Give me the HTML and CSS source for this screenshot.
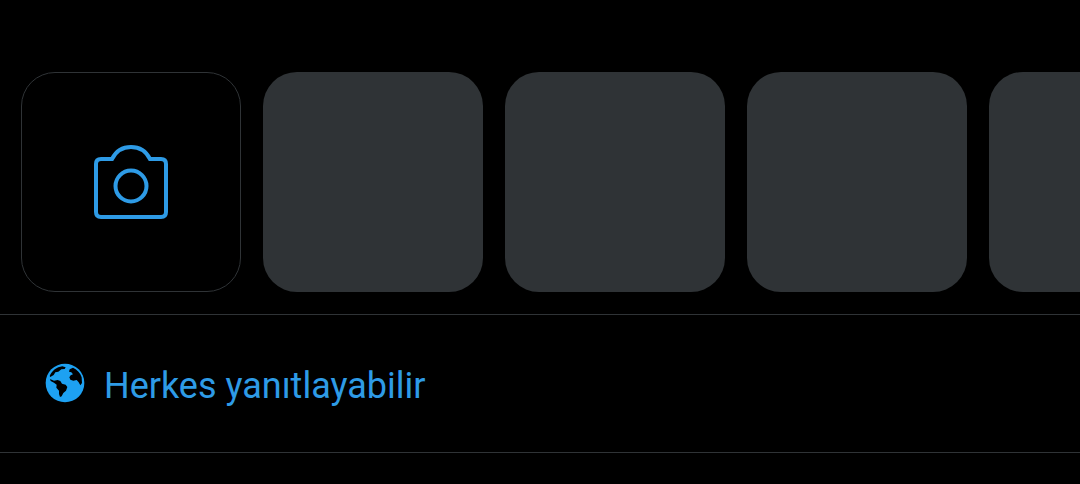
FILE: index.html
```html
<!DOCTYPE html>
<html lang="tr">
<head>
    <meta charset="utf-8">
    <meta name="viewport" content="width=device-width, initial-scale=1">
    <title>Tweet</title>
    <link rel="stylesheet" href="styles.css">
</head>
<body>
    <div class="media-strip">
        <button type="button" class="tile camera" aria-label="Kamera">
            <svg class="camera-icon" viewBox="0 0 100 100" aria-hidden="true">
                <path d="M20 27H31C35 19 42 15 50 15S65 19 69 27H80Q85 27 85 32V80Q85 85 80 85H20Q15 85 15 80V32Q15 27 20 27Z"/>
                <circle cx="50" cy="54" r="15.500"/>
            </svg>
        </button>
        <div class="tile photo"></div>
        <div class="tile photo"></div>
        <div class="tile photo"></div>
        <div class="tile photo"></div>
    </div>
    <button type="button" class="reply-setting">
        <svg class="globe-icon" viewBox="15 15 120 120" aria-hidden="true">
            <circle class="globe" cx="75" cy="75" r="58"/>
            <path class="cutout" d="M29 54C36 38 50 27 67 25L77 28L74 33L64 34L55 41L46 43L41 51L31 57Z"/>
            <path class="cutout" d="M30 63L42 68L53 66L61 69L66 77L77 80L82 87L78 98L70 105L65 115L60 117L57 108L57 98L49 89L50 80L42 74L32 69Z"/>
            <path class="cutout" d="M89 34L99 29C112 35 121 45 125 58L126 75L121 82L116 73L110 66L100 68L91 65L88 58L92 52L99 49L94 43L87 41Z"/>
        </svg>
        <span>Herkes yanıtlayabilir</span>
    </button>
</body>
</html>
```

FILE: styles.css
```css
* {
    box-sizing: border-box;
}

body {
    margin: 0;
    background-color: #000;
    color: #2e9be6;
    font-family: Roboto, sans-serif;
    overflow-x: hidden;
}

button {
    background: none;
    color: inherit;
    font-family: inherit;
    cursor: pointer;
}

.media-strip {
    display: flex;
    gap: 22px;
    padding: 72px 0 22px 21px;
    overflow: hidden;
}

.tile {
    flex: none;
    width: 220px;
    height: 220px;
    border-radius: 34px;
}

.camera {
    display: flex;
    align-items: center;
    justify-content: center;
    padding: 0;
    border: 1px solid #2f3336;
}

.camera-icon {
    width: 100px;
    height: 100px;
    fill: none;
    stroke: currentColor;
    stroke-width: 4;
}

.photo {
    background-color: #2f3336;
}

.reply-setting {
    display: flex;
    align-items: center;
    gap: 19px;
    width: 100%;
    padding: 48px 45px 43px;
    border: solid #2f3336;
    border-width: 1px 0;
    font-size: 36px;
    line-height: 42px;
    text-align: left;
}

.globe-icon {
    width: 40px;
    height: 40px;
    margin-bottom: 6px;
}

.globe {
    fill: #1da1f2;
}

.cutout {
    fill: #000;
}
```
